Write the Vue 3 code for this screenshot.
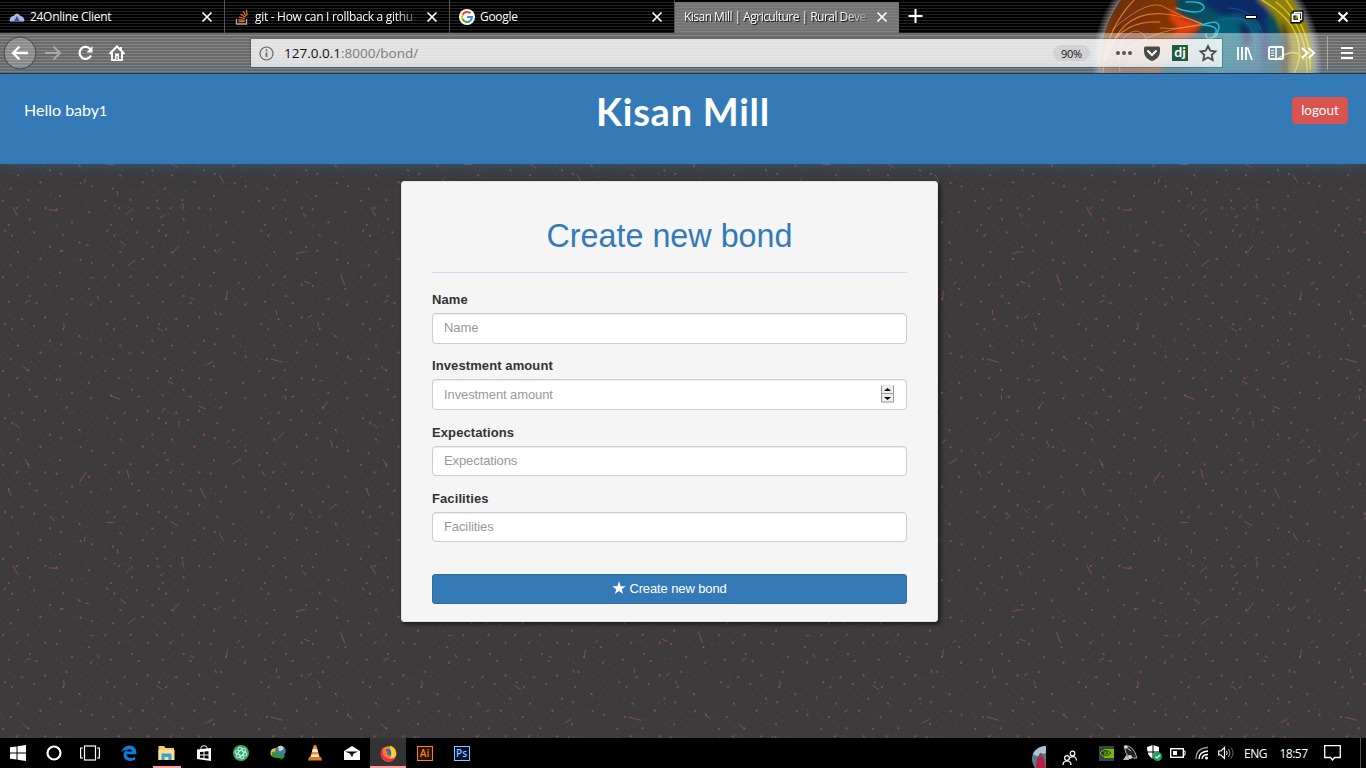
<script setup>
const tabs = [
  { title: '24Online Client', icon: 'cloud' },
  { title: 'git - How can I rollback a githu', icon: 'stack', fade: true },
  { title: 'Google', icon: 'google' },
  { title: 'Kisan Mill | Agriculture | Rural Deve', active: true, fade: true },
]

const fields = [
  { label: 'Name' },
  { label: 'Investment amount', stepper: true },
  { label: 'Expectations' },
  { label: 'Facilities' },
]

// Strokes of the background tile, in thirds of a pixel.
const dashes = [
  [68,197,86,214],[77,7,92,0],[178,234,182,245],[190,68,193,78],[193,78,190,90],[470,83,489,95],[300,124,303,115],
  [383,163,396,155],[620,194,640,184],[813,177,849,187],[1042,172,1057,181],[503,243,521,252],[330,287,361,298],
  [484,338,497,325],[597,319,618,327],[855,285,857,299],[968,326,982,304],[958,244,970,240],[44,371,58,384],
  [537,363,538,377],[677,430,690,418],[836,414,853,397],[991,421,999,440],[76,478,88,504],[495,477,509,484],
  [697,493,723,475],[238,547,259,516],[380,508,388,536],[787,514,794,529],[25,567,34,588],[515,570,516,582],
  [601,564,617,596],[988,629,1010,611],[925,627,935,639],[870,661,882,643],[150,646,163,664],[318,667,343,668],
  [511,663,534,678],[657,698,671,722],[253,724,256,710],[352,747,353,760],[340,794,349,788],[38,795,54,824],
  [146,803,172,806],[378,818,398,799],[470,795,482,803],[480,828,494,819],[548,782,550,802],[910,813,916,826],
  [360,897,378,911],[255,910,267,910],[181,929,194,925],[516,935,538,909],[650,933,664,917],[888,935,917,928],
  [382,973,406,954],[270,1007,283,1007],[710,1028,720,1022],[912,1018,929,1024],[1021,996,1034,1029],
  [682,1047,679,1074],[571,1067,584,1074],[291,1062,297,1074],[645,34,650,45],[829,30,830,45],[924,53,936,46],[953,68,957,80],
].map((d) => d.map((n) => n / 3))

const seeds = [
  [15,14],[103,19],[190,28],[54,78],[183,74],[242,101],[122,99],[275,111],[32,118],[180,140],[9,154],[136,176],
  [50,176],[170,180],[267,189],[216,219],[89,210],[26,227],[110,231],[273,236],[200,264],[136,275],[67,279],[150,63],[238,49],[36,29],[85,152],
]
const faint = []
for (let i = 0; i < 66; i++) {
  faint.push([(i * 83 + 41 + (i % 5) * 9) % 307, (i * 47 + 23 + (i % 7) * 5) % 281])
}
function spread(list) {
  const out = []
  const cols = [[0, 307], [307, 155], [462, 307], [769, 305]]
  const rows = [[0, 281], [281, 282], [563, 281], [844, 230]]
  for (const [cx, cw] of cols)
    for (const [cy, ch] of rows)
      for (const [x, y] of list) if (x < cw && y < ch) out.push([(cx + x) / 3, ((cy + y + 852) % 1074) / 3])
  return out
}
const dots = spread(seeds)
const specks = spread(faint)
</script>

<template>
  <div class="screen">
    <div class="browser">
      <svg class="art" width="246" height="73" viewBox="1090 0 246 73">
        <defs>
          <radialGradient id="glow" gradientUnits="userSpaceOnUse" cx="1207" cy="63" r="115">
            <stop offset="0.9" stop-color="#fff" stop-opacity=".6" /><stop offset="1" stop-color="#fff" stop-opacity="0" />
          </radialGradient>
          <clipPath id="ball"><circle cx="1207" cy="63" r="106.5" /></clipPath>
          <linearGradient id="fire" x1="0" x2="1"><stop offset="0" stop-color="#b85a16" /><stop offset=".3" stop-color="#6b2f08" /><stop offset=".7" stop-color="#823506" /><stop offset="1" stop-color="#a83408" /></linearGradient>
          <linearGradient id="sea" x1="0" x2="1"><stop offset="0" stop-color="#06343e" /><stop offset=".6" stop-color="#07566c" /><stop offset="1" stop-color="#0b3550" /></linearGradient>
          <filter id="melt"><feGaussianBlur stdDeviation="2" /></filter>
        </defs>
        <circle cx="1207" cy="63" r="115" fill="url(#glow)" />
        <g clip-path="url(#ball)">
          <rect x="1090" y="0" width="240" height="80" fill="url(#sea)" />
          <g filter="url(#melt)">
            <path d="M1080 -9H1178Q1170 14 1200 23Q1204 34 1176 44Q1162 56 1160 83H1080Z" fill="url(#fire)" />
            <path d="M1172 8Q1176 20 1202 23Q1198 32 1172 36Q1184 27 1170 20Z" fill="#e2420c" />
            <path d="M1205 -5H1278L1266 20L1270 52L1256 83H1226Q1236 50 1254 42Q1238 40 1240 24Q1222 14 1205 6Z" fill="#0a2c68" />
            <path d="M1222 18Q1244 8 1260 26L1262 83H1205Q1206 50 1222 18Z" fill="#08667c" opacity=".75" />
            <path d="M1238 24Q1250 20 1252 42L1240 50Q1244 36 1238 24Z" fill="#082a58" />
            <path d="M1258 -9H1293Q1326 30 1313 83H1273Q1292 50 1280 30Q1274 12 1258 0Z" fill="#8f800c" />
            <path d="M1281 20Q1297 38 1287 83H1276Q1288 50 1281 20Z" fill="#2d2908" />
          </g>
          <g fill="none" stroke-linecap="round">
            <path d="M1103 73Q1105 30 1134 0M1106 60Q1120 10 1164 14Q1186 16 1202 24M1110 46Q1126 20 1160 22" stroke="#ef8228" stroke-width="1.200" opacity=".85" />
            <path d="M1112 30Q1150 -4 1166 8Q1190 20 1202 24Q1180 30 1160 28M1108 66Q1140 30 1202 25M1120 72Q1114 34 1136 31Q1152 34 1142 50" stroke="#ffb066" stroke-width=".7" opacity=".75" />
            <path d="M1176 8Q1200 16 1204 8Q1204 1 1186 2M1202 25Q1226 16 1216 36Q1206 42 1206 34M1202 25Q1222 26 1214 35" stroke="#35b7d0" stroke-width="1.500" />
            <path d="M1212 22Q1230 16 1244 20Q1260 34 1254 60M1228 8Q1256 8 1264 38" stroke="#1598bc" stroke-width="1" opacity=".4" />
            <path d="M1262 0Q1292 18 1298 40Q1302 60 1294 73M1276 2Q1308 26 1307 73M1286 0Q1312 34 1310 70M1276 60Q1296 45 1304 60" stroke="#dfd226" stroke-width="1.500" opacity=".8" />
          </g>
        </g>
      </svg>

      <div class="tabstrip">
        <div v-for="tab in tabs" :key="tab.title" class="tab" :class="{ active: tab.active }">
          <svg v-if="tab.icon === 'cloud'" class="fav" width="16" height="16" viewBox="0 0 16 16">
            <path d="M.5 12Q1 7 4.500 7Q8 2 11.500 7Q15 7.500 15.500 12Z" fill="#a9b8e4" /><path d="M5 12L8 7L10.500 12Z" fill="#42557e" /><path d="M1 12.500H15" stroke="#56658a" />
          </svg>
          <svg v-else-if="tab.icon === 'stack'" class="fav" width="16" height="16" viewBox="0 0 16 16" fill="none">
            <path d="M2.500 10V15H12.500V10" stroke="#a9aaad" stroke-width="1.300" /><path d="M4.500 12.700H10.500M4.500 10.600L10.500 11.300M5 8L10.800 9.800M6.500 5L11.400 8.300M9 2.200L12.300 7.200M12.300 .5L13.200 6.300" stroke="#e87722" stroke-width="1.200" />
          </svg>
          <svg v-else-if="tab.icon === 'google'" class="fav" width="16" height="16" viewBox="0 0 16 16" fill="none">
            <circle cx="8" cy="8" r="8" fill="#fff" /><path d="M11.500 4.300A5 5 0 0 0 3.600 5.700" stroke="#ea4335" stroke-width="2" /><path d="M3.600 5.700A5 5 0 0 0 3.600 10.300" stroke="#fbbc05" stroke-width="2" /><path d="M3.600 10.300A5 5 0 0 0 11 12" stroke="#34a853" stroke-width="2" /><path d="M8 8H13A5 5 0 0 1 11 12" stroke="#4285f4" stroke-width="2" />
          </svg>
          <span class="tabtitle" :class="{ fade: tab.fade }">{{ tab.title }}</span>
          <svg class="close" width="12" height="12" viewBox="0 0 12 12"><path d="M1.500 1.500L10.500 10.500M10.500 1.500L1.500 10.500" stroke="#fff" stroke-width="1.700" /></svg>
        </div>
        <svg class="plus" width="15" height="15" viewBox="0 0 15 15"><path d="M7.500 0V14M.5 7H14.500" stroke="#fff" stroke-width="2" /></svg>
        <svg class="winctl" width="104" height="16" viewBox="0 0 104 16" fill="none">
          <path d="M0 8H12" stroke="#000" stroke-width="4" /><path d="M1 8H11" stroke="#fff" stroke-width="2" />
          <path d="M49.500 3.500H56.500V10.500H54.500V12.500H47.500V5.500H49.500Z" stroke="#000" stroke-width="4" /><path d="M49.500 5V3.500H56.500V10.500H55" stroke="#fff" stroke-width="1.300" /><rect x="47.500" y="5.500" width="6.500" height="6.500" stroke="#fff" stroke-width="2" />
          <path d="M93.500 3.500L102.500 12.500M102.500 3.500L93.500 12.500" stroke="#fff" stroke-width="2" />
        </svg>
      </div>

      <div class="toolbar">
        <svg class="nav" width="130" height="40" viewBox="0 0 130 40" fill="none" stroke="#fff" stroke-width="2">
          <circle cx="20" cy="20" r="16" fill="#fff" fill-opacity=".22" stroke="#444" stroke-width="1" />
          <path d="M28 20H13M19.500 13.500L13 20L19.500 26.500" stroke-width="2.300" />
          <path d="M45 20H60M53.500 13.500L60 20L53.500 26.500" stroke="#aaa" />
          <path d="M90.500 16.500A6 6 0 1 0 91 22.500" stroke-width="2.300" /><path d="M92.500 13V19.500H86.500Z" fill="#fff" stroke="none" />
          <path d="M109.500 21L117 13.500L124.500 21M112 19.500V27H122V19.500" stroke-width="2" /><path d="M121 14V18" /><rect x="115" y="20.500" width="4" height="7" fill="#fff" stroke="none" /><path d="M117 23V27" stroke="#777" stroke-width="1" />
        </svg>
        <div class="urlbar">
          <svg class="info" width="15" height="15" viewBox="0 0 15 15" fill="none" stroke="#666" stroke-width="1.200"><circle cx="7.500" cy="7.500" r="6.500" /><path d="M7.500 6.500V11M7.500 3.500V5.200" stroke-width="1.700" /></svg>
          <span class="url">127.0.0.1<span class="path">:8000/bond/</span></span>
          <span class="zoom">90%</span>
          <svg class="urlicons" width="106" height="20" viewBox="0 0 106 20" fill="none">
            <g fill="#555"><circle cx="3" cy="10" r="2" /><circle cx="9" cy="10" r="2" /><circle cx="15" cy="10" r="2" /></g>
            <path d="M30.500 3.500H43.500Q45 3.500 45 5V9Q44.500 15.500 37 18Q29.500 15.500 29 9V5Q29 3.500 30.500 3.500Z" fill="#4b4b4b" /><path d="M33 8L37 12L41 8" stroke="#fff" stroke-width="2" stroke-linecap="round" />
            <rect x="57" y="2" width="16" height="16" fill="#225a3c" /><text x="65" y="14" text-anchor="middle" class="dj">dj</text>
            <path d="M93 3L95.300 7.700L100.500 8.300L96.700 11.900L97.700 17L93 14.500L88.300 17L89.300 11.900L85.500 8.300L90.700 7.700Z" stroke="#4b4b4b" stroke-width="1.800" />
          </svg>
        </div>
        <svg class="tools" width="130" height="40" viewBox="0 0 130 40" fill="none" stroke="#fff" stroke-width="2">
          <path d="M3 14V27M7 14V27M11 14V27M12.500 14.500L17 27" stroke-width="1.800" />
          <rect x="34" y="14" width="14" height="12" rx="1.500" /><path d="M41 14V26" stroke-width="1.500" /><path d="M36 17.500H39M36 20H39M36 22.500H39" stroke-width="1" />
          <path d="M67 15L72.500 20L67 25M73.500 15L79 20L73.500 25" stroke-width="2" />
          <path d="M92.500 3V37" stroke="#aaa" stroke-width="1" /><path d="M106 15H118M106 20H118M106 25H118" stroke-width="2.200" />
        </svg>
      </div>
    </div>

    <main class="page">
      <svg class="texture" width="1366" height="574">
        <defs>
          <pattern id="tile" patternUnits="userSpaceOnUse" x="0" y="136" width="358" height="358">
            <rect width="358" height="358" fill="#3d3b3c" />
            <circle v-for="(d, i) in specks" :key="'s' + i" :cx="d[0]" :cy="d[1]" r=".75" fill="#7b4d55" opacity=".55" />
            <circle v-for="(d, i) in dots" :key="'d' + i" :cx="d[0]" :cy="d[1]" r="1.100" fill="#8b535e" opacity=".85" />
            <path v-for="(d, i) in dashes" :key="'l' + i" :d="`M${d[0]} ${d[1]}L${d[2]} ${d[3]}`" stroke="#8a535d" stroke-width="1" opacity=".82" />
          </pattern>
        </defs>
        <rect width="1366" height="574" fill="url(#tile)" />
      </svg>
      <header class="header">
        <span class="hello">Hello baby<span class="one">1</span></span>
        <h1 class="brand">Kisan Mill</h1>
        <a class="logout">logout</a>
      </header>
      <form class="card" @submit.prevent>
        <h2 class="title"><span>Create new bond</span></h2>
        <div v-for="f in fields" :key="f.label" class="group">
          <label class="label">{{ f.label }}</label>
          <div class="control">
            <span class="hint">{{ f.label }}</span>
            <svg v-if="f.stepper" width="13" height="18" viewBox="0 0 13 18"><rect width="13" height="18" fill="#eee" /><path d="M.5 8.500H12.500V.5M.5 17H12.500V9M.5 .5V17" fill="none" stroke="#999" /><path d="M3 6L6.500 3L10 6ZM3 12L6.500 15L10 12Z" fill="#000" /></svg>
          </div>
        </div>
        <button class="submit">
          <svg width="14" height="14" viewBox="0 0 14 14"><path d="M7 .3L8.700 5.200H13.800L9.700 8.200L11.200 13L7 10.100L2.800 13L4.300 8.200L.2 5.200H5.300Z" fill="#fff" /></svg>
          <span>Create new bond</span>
        </button>
      </form>
    </main>

    <footer class="taskbar">
      <div class="cell sys"><svg width="16" height="16" viewBox="0 0 16 16" fill="#fff"><path d="M0 2.300L6.500 1.400V7.500H0ZM7.500 1.200L16 0V7.500H7.500ZM0 8.500H6.500V14.600L0 13.700ZM7.500 8.500H16V16L7.500 14.800Z" /></svg></div>
      <div class="cell sys"><svg width="16" height="16" viewBox="0 0 16 16"><circle cx="8" cy="8" r="6.500" fill="none" stroke="#fff" stroke-width="2.200" /></svg></div>
      <div class="cell sys last"><svg width="20" height="16" viewBox="0 0 20 16" fill="none" stroke="#fff" stroke-width="1.200"><rect x="4.500" y="1" width="11" height="14" /><path d="M3 3H.6V13H3M17 3H19.400V13H17" /></svg></div>
      <div class="cell edgeapp"><svg width="16" height="16" viewBox="0 0 16 16"><path d="M.5 7.500C2-1.500 15-2 15.300 7V9.300H5.500C6 13.500 11 13.700 14 11.700V14.800C9 17.300 2.500 15.500 2.500 10C2.500 7 4.500 5.500 6.500 4.700C3.500 4.800 1.500 6 .5 7.500ZM5.700 6.500H11C11 3.500 6.500 3.500 5.700 6.500Z" fill="#0b7ddb" /></svg></div>
      <div class="cell open"><svg width="17" height="15" viewBox="0 0 17 15"><path d="M.5 0H6L7.500 2H16V14H.5Z" fill="#f8cf66" /><path d="M.5 4H16.500V14H.5Z" fill="#ffe18c" /><path d="M3.500 14V7.500H13.500V14H10.500V11H6.500V14Z" fill="#34a5dc" /></svg></div>
      <div class="cell"><svg width="14" height="16" viewBox="0 0 14 16"><path d="M0 4.500L14 3V16L0 14Z" fill="#fff" /><path d="M4 6V2.500Q4 .8 7 .8Q10 .8 10 2.500V5" fill="none" stroke="#fff" /><path d="M3 7L6.500 6.700V9.500H3ZM7.500 6.600L11.500 6.200V9.500H7.500ZM3 10.500H6.500V13L3 12.700ZM7.500 10.500H11.500V13.700L7.500 13.200Z" fill="#000" /></svg></div>
      <div class="cell"><svg width="16" height="16" viewBox="0 0 16 16" fill="none"><circle cx="8" cy="8" r="8" fill="#36a873" /><g stroke="#c7edd8"><ellipse cx="8" cy="8" rx="2.300" ry="6" transform="rotate(-15 8 8)" /><ellipse cx="8" cy="8" rx="2.300" ry="6" transform="rotate(45 8 8)" /><ellipse cx="8" cy="8" rx="2.300" ry="6" transform="rotate(105 8 8)" /></g></svg></div>
      <div class="cell"><svg width="16" height="16" viewBox="0 0 16 16"><path d="M.5 9Q0 3 6 3L5 12Q2 13 .5 9Z" fill="#e8c930" /><path d="M1 11Q6 5 8 12Q5 14 1 11Z" fill="#cf4c24" /><circle cx="10.500" cy="6" r="5.300" fill="#4775b9" /><path d="M8 2Q11-1 14 3Q12 7 9 6Z" fill="#c9dba0" /><path d="M4 6Q5 10 10 10V8L15.500 11L10.500 15V13Q3 14 1.500 8Z" fill="#229b2f" /></svg></div>
      <div class="cell"><svg width="14" height="16" viewBox="0 0 14 16"><path d="M7 0L8.300 .5L12 13H2L5.700 .5Z" fill="#f78b1d" /><path d="M4.800 4H9.200L10 7H4ZM3.500 9.500H10.500L11.200 12H2.800Z" fill="#eee" /><path d="M1 12H13L14 15.500H0Z" fill="#e67818" /></svg></div>
      <div class="cell"><svg width="16" height="14" viewBox="0 0 16 14"><path d="M0 5L8 0L16 5V14H0Z" fill="#fff" /><path d="M1 5.500H14L8 8.500Z" fill="#000" /><path d="M6 8L8 11L9.500 8.500" fill="#000" /></svg></div>
      <div class="cell open current"><svg width="17" height="17" viewBox="0 0 17 17"><circle cx="8.500" cy="9" r="7.700" fill="#ff8320" /><path d="M1 6Q-1 16 9 16.500Q15 16 16 10Q11 15 7 13Q2 11 3 5L3 2Z" fill="#ef2854" /><circle cx="8.200" cy="8" r="4" fill="#2868c8" /><path d="M10 .5Q17 3 16.300 10Q14 15 9 13Q12 11 11 7Q10 4 10 .5Z" fill="#ffcb2d" /><path d="M3 6Q5 4 8 7L7 9Q9 11 11 9Q9 14 5 11Z" fill="#ff7b20" /></svg></div>
      <div class="cell"><span class="adobe ai">Ai</span></div>
      <div class="cell"><span class="adobe ps">Ps</span></div>

      <div class="tray">
        <svg width="14" height="22" viewBox="0 0 14 22"><defs><clipPath id="me"><path d="M14 0C4 0-5 10 3 22H14Z" /></clipPath></defs><g clip-path="url(#me)"><path d="M0 0H14V22H0Z" fill="#567b88" /><path d="M0 0H14V7L5 10L0 8Z" fill="#a8c5d2" /><path d="M5 13Q9 6 12 12L14 22H4Z" fill="#b52046" /><circle cx="9" cy="9" r="2" fill="#76513f" /></g></svg>
        <svg class="people" width="16" height="16" viewBox="0 0 16 16" fill="none" stroke="#fff" stroke-width="1.200"><circle cx="10.500" cy="3.500" r="2.300" /><circle cx="5" cy="8" r="2.400" /><path d="M1 15Q1 11 5 11Q9 11 9 15M8 7.500Q14 5 14.500 10.500" /></svg>
        <div class="ico"><svg width="15" height="15" viewBox="0 0 15 15" fill="none"><rect width="15" height="15" fill="#3a4149" /><path d="M5 3H15V12H5Z" fill="#76b900" /><path d="M1 7Q6 2 12 7Q7 12 3 7Q7 4 9 7Q7 9 5.500 7" stroke="#1e3e08" /><path d="M1 7Q3 4.500 5 4.400M1 7Q3 10 5 10.500" stroke="#76b900" /></svg></div>
        <div class="ico"><svg width="16" height="16" viewBox="0 0 16 16"><path d="M2 1Q11-1 15 13Q8 14 4 8Z" fill="#222" stroke="#aaa" /><path d="M3 1L9 6" stroke="#ccc" /><circle cx="4" cy="2" r="1.500" fill="#eee" /><path d="M5 9L1 15H7Z" fill="#bbb" /><circle cx="8" cy="12" r="2" fill="#ddd" /></svg></div>
        <div class="ico"><svg width="16" height="16" viewBox="0 0 16 16"><path d="M7 0L13 2V7Q12 12 7 14Q1 11 1 2Z" fill="#fff" /><path d="M7 0V14M1 7H13" stroke="#000" /><circle cx="11.500" cy="11.500" r="4.500" fill="#16a45c" /><path d="M9.500 11.500L11 13L14 10" fill="none" stroke="#fff" stroke-width="1.200" /></svg></div>
        <div class="ico"><svg width="16" height="10" viewBox="0 0 16 10" fill="none"><rect x=".7" y=".7" width="12.600" height="8.600" stroke="#fff" stroke-width="1.400" /><path d="M14 3H15V7H14" stroke="#fff" /><path d="M3 3H7V7H3Z" fill="#fff" /></svg></div>
        <div class="ico"><svg width="14" height="14" viewBox="0 0 14 14" fill="none" stroke-width="1.300"><path d="M1 13Q1 2 13 1.500" stroke="#999" /><path d="M4 13Q4 5.500 13 5" stroke="#fff" /><path d="M7 13Q7.500 8.500 13 8.500" stroke="#fff" /><circle cx="11.500" cy="12" r="1.500" fill="#fff" /></svg></div>
        <div class="ico"><svg width="16" height="14" viewBox="0 0 16 14" fill="none" stroke="#fff"><path d="M.7 5H3L6.500 1.500V12.500L3 9H.7Z" stroke-width="1.200" /><path d="M8.500 5Q10 7 8.500 9" /><path d="M10.500 3Q13.500 7 10.500 11" stroke="#aaa" /><path d="M13 1.500Q17 7 13 12.500" stroke="#666" /></svg></div>
        <span class="lang">ENG</span>
        <span class="clock">18:57</span>
        <svg class="notice" width="17" height="16" viewBox="0 0 17 16"><path d="M.7 .7H16.300V12.500H10.500L8.500 15L6.500 12.500H.7Z" fill="none" stroke="#fff" stroke-width="1.300" /></svg>
        <i class="edge"></i>
      </div>
    </footer>
  </div>
</template>

<style>
html, body { margin: 0; background: #000; overflow: hidden; }
</style>

<style scoped>
* { box-sizing: border-box; }
svg { display: block; flex: none; }
.screen { width: 1366px; height: 768px; display: flex; flex-direction: column; overflow: hidden; font-family: "Liberation Sans", Arial, sans-serif; white-space: nowrap; }

.browser { position: relative; height: 74px; flex: none; background: repeating-linear-gradient(#000 0 2px, #222 2px 3px); font-family: "Open Sans", "Noto Sans", sans-serif; }
.art { position: absolute; left: 1090px; top: 0; }
.tabstrip { position: relative; height: 33px; display: flex; align-items: center; }
.tab { width: 225px; height: 33px; display: flex; align-items: center; padding: 1px 11px 0 9px; border-right: 1px solid #555; }
.tab.active { width: 224px; height: 31px; margin-top: 2px; padding: 0 11px 1px 9px; background: repeating-linear-gradient(#747474 0 2px, #7f7f7f 2px 3px); border: 0; }
.fav { margin-right: 5px; }
.tabtitle { flex: 1; min-width: 0; overflow: hidden; color: #fff; font-size: 12px; letter-spacing: -0.3px; line-height: 18px; text-shadow: 1px 1px 1px #000; }
.active .tabtitle { letter-spacing: -0.52px; }
.fade { mask-image: linear-gradient(to right, #000 85%, transparent 102%); }
.close { margin-left: 6px; }
.plus { margin: 0 0 1px 9px; }
.winctl { margin-left: 322px; }

.toolbar { position: relative; height: 41px; display: flex; align-items: center; background: repeating-linear-gradient(rgba(255,255,255,.42) 0 2px, rgba(255,255,255,.45) 2px 3px); border-bottom: 1px solid #222; }
.nav { margin-right: 121px; }
.urlbar { width: 971px; height: 28px; display: flex; align-items: center; background: rgba(255,255,255,.8); box-shadow: 0 0 0 1px rgba(0,0,0,.2); padding-left: 8px; }
.url { margin-left: 10px; flex: 1; font-size: 13.5px; color: #111; }
.path { color: #7c7c7c; }
.zoom { width: 37px; height: 16px; border-radius: 8px; background: rgba(0,0,0,.07); color: #111; font-size: 11px; line-height: 17px; text-align: center; letter-spacing: -0.3px; margin-right: 25px; }
.urlicons { margin-right: 1px; }
.dj { font: bold 14px Lato, sans-serif; fill: #fff; }
.tools { margin-left: 13px; }

.page { position: relative; flex: 1; background: #3d3b3c; }
.texture { position: absolute; left: 0; top: 90px; }
.header { position: relative; height: 90px; display: grid; grid-template-columns: 1fr auto 1fr; align-items: start; background: #337ab7; box-shadow: 0 0 14px rgba(51,122,183,.5); color: #fff; font-family: Lato, sans-serif; }
.hello { padding: 25px 0 0 24px; font-size: 16px; line-height: 22px; }
.one { font-size: 14px; }
.brand { margin: 13px 0 0; font-size: 38px; line-height: 48px; font-weight: bold; letter-spacing: 0.75px; }
.logout { justify-self: end; margin: 23px 18px 0 0; width: 56px; height: 27px; border-radius: 4px; background: #d9534f; font-size: 13.5px; line-height: 26px; text-align: center; }

.card { position: relative; width: 537px; height: 441px; margin: 17px 0 0 401px; padding: 0 30px; background: #f5f5f5; border: 1px solid #e3e3e3; border-radius: 3px; box-shadow: 2px 2px 4px rgba(0,0,0,.6); }
.title { margin: 35px 0 18px; height: 56px; border-bottom: 1px solid #cadcee; color: #337ab7; font-size: 32.3px; line-height: 38px; font-weight: normal; text-align: center; }
.group { height: 66.300px; }
.label { display: block; height: 22px; color: #333; font-size: 13px; line-height: 18px; font-weight: bold; letter-spacing: 0.1px; }
.control { height: 30.600px; display: flex; align-items: center; justify-content: space-between; padding: 0 12px 1px 11px; background: #fff; border: 1px solid #ccc; border-radius: 4px; box-shadow: inset 0 1px 1px rgba(0,0,0,.075); color: #999; font-size: 13px; letter-spacing: -0.1px; }
.submit { width: 475px; height: 30px; margin: 18px 0 0; padding: 0 0 2px; display: flex; align-items: center; justify-content: center; gap: 3px; border: 1px solid #2e6da4; border-radius: 3px; background: #337ab7; color: #fff; font: 13px "Liberation Sans", Arial, sans-serif; letter-spacing: -0.12px; }

.taskbar { height: 30px; flex: none; display: flex; background: #000; color: #fff; font-family: "Open Sans", "Noto Sans", sans-serif; }
.cell { width: 37px; display: flex; align-items: center; justify-content: center; }
.cell.sys { width: 36px; }
.cell.last { margin-right: 3px; }
.edgeapp { padding-right: 1px; }
.open { background: linear-gradient(#ff9a9a, #ff9a9a) 50% 100% / 28px 2px no-repeat; }
.current { width: 36px; background-color: #333; background-size: 100% 2px; }
.adobe { width: 16px; height: 15px; border: 1px solid; font-size: 10px; font-weight: 600; line-height: 13px; text-align: center; }
.ai { color: #ff7f18; background: #261300; }
.ps { color: #83c7ff; background: #001033; }
.tray { margin-left: 552px; flex: 1; display: flex; align-items: center; }
.tray > svg:first-child { margin-top: 8px; }
.people { margin: 9px 16px 0 16px; }
.ico { width: 24px; display: flex; justify-content: center; }
.lang { width: 35px; text-align: center; font-size: 12px; letter-spacing: -0.4px; }
.clock { width: 41px; text-align: center; font-size: 12px; letter-spacing: -0.5px; }
.notice { margin-left: 10px; }
.edge { width: 1px; height: 30px; margin-left: 19px; background: #555; }
</style>
